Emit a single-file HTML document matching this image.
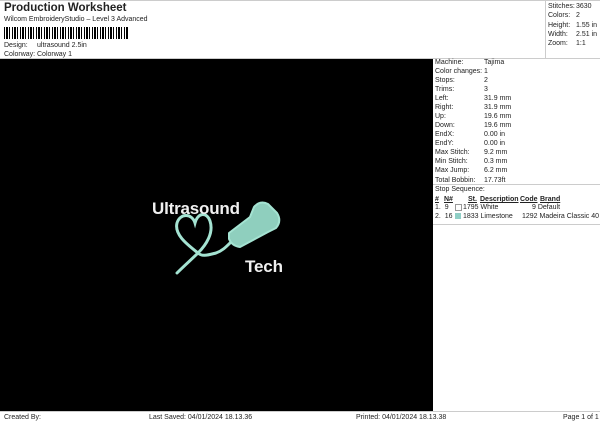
<!DOCTYPE html>
<html><head><style>
body{margin:0;width:600px;height:424px;background:#fff;font-family:"Liberation Sans",sans-serif;font-size:7px;color:#222;position:relative;overflow:hidden}
.a{position:absolute;white-space:nowrap;line-height:9px}
.r{position:absolute;left:435px;line-height:9.08px}
.r div span{display:inline-block;width:49px}
</style></head><body>
<div class="a" style="left:4px;top:2px;font-size:11.5px;font-weight:bold;line-height:13px">Production Worksheet</div>
<div class="a" style="left:4px;top:15px">Wilcom EmbroideryStudio – Level 3 Advanced</div>
<div style="position:absolute;left:4px;top:27px;width:125px;height:12px;background:repeating-linear-gradient(90deg,#000 0 1px,#fff 1px 2px,#000 2px 4px,#fff 4px 5px,#000 5px 6px,#fff 6px 8px)"></div>
<div class="a" style="left:4px;top:41px">Design:</div><div class="a" style="left:37px;top:41px">ultrasound 2.5in</div>
<div class="a" style="left:4px;top:50px">Colorway:</div><div class="a" style="left:37px;top:50px">Colorway 1</div>
<div style="position:absolute;left:0;top:0;width:600px;height:1px;background:#ccc"></div>
<div style="position:absolute;left:545px;top:0;width:1px;height:59px;background:#ccc"></div>
<div style="position:absolute;left:0;top:58px;width:600px;height:1px;background:#ccc"></div>
<div class="a" style="left:548px;top:2px;line-height:9.3px">Stitches:<br>Colors:<br>Height:<br>Width:<br>Zoom:</div>
<div class="a" style="left:576px;top:2px;line-height:9.3px">3630<br>2<br>1.55 in<br>2.51 in<br>1:1</div>
<div style="position:absolute;left:0;top:59px;width:433px;height:352px;background:#000"></div>
<svg style="position:absolute;left:140px;top:185px" width="160" height="100" viewBox="0 0 160 100">
<g fill="none" stroke="#a4e3d2" stroke-linecap="round" stroke-width="3">
<path d="M37 88 C 45 80 52 74 58 68 C 66 60 74 48 70 36 C 67 27 58 27 55 38 C 52 28 40 28 37 38 C 34 50 48 60 58 68 C 62 72 68 70 76 68 C 82 66 86 62 90 58"/>
</g>
<path d="M89 48 L110 32 L114 22 Q120 15 128 19 L137 28 Q142 36 136 43 L128 47 L100 62 Q92 61 89 54 Z" fill="#8fcfbe" stroke="#a4e3d2" stroke-width="2" stroke-linejoin="round"/>
<text x="12" y="29" font-family="Liberation Sans,sans-serif" font-size="17" font-weight="bold" fill="#f0f0f0" textLength="88">Ultrasound</text>
<text x="105" y="87" font-family="Liberation Sans,sans-serif" font-size="17" font-weight="bold" fill="#f0f0f0" textLength="38">Tech</text>
</svg>
<div class="r" style="top:57.5px">
<div><span>Machine:</span>Tajima</div><div><span>Color changes:</span>1</div><div><span>Stops:</span>2</div><div><span>Trims:</span>3</div><div><span>Left:</span>31.9 mm</div><div><span>Right:</span>31.9 mm</div><div><span>Up:</span>19.6 mm</div><div><span>Down:</span>19.6 mm</div><div><span>EndX:</span>0.00 in</div><div><span>EndY:</span>0.00 in</div><div><span>Max Stitch:</span>9.2 mm</div><div><span>Min Stitch:</span>0.3 mm</div><div><span>Max Jump:</span>6.2 mm</div><div><span>Total Bobbin:</span>17.73ft</div>
</div>
<div style="position:absolute;left:433px;top:184px;width:167px;height:1px;background:#ccc"></div>
<div class="a" style="left:435px;top:185px">Stop Sequence:</div>
<div class="a" style="left:435px;top:195px;font-weight:bold;text-decoration:underline">#</div>
<div class="a" style="left:444px;top:195px;font-weight:bold;text-decoration:underline">N#</div>
<div class="a" style="left:468px;top:195px;font-weight:bold;text-decoration:underline">St.</div>
<div class="a" style="left:480px;top:195px;font-weight:bold;text-decoration:underline">Description</div>
<div class="a" style="left:520px;top:195px;font-weight:bold;text-decoration:underline">Code</div>
<div class="a" style="left:540px;top:195px;font-weight:bold;text-decoration:underline">Brand</div>
<div class="a" style="left:435px;top:203px">1.&nbsp; 9</div><div style="position:absolute;left:455px;top:204px;width:5px;height:5px;border:1px solid #999;background:#fff"></div><div class="a" style="left:463px;top:203px">1795 White</div><div class="a" style="left:532px;top:203px">9 Default</div>
<div class="a" style="left:435px;top:212px">2.&nbsp; 16</div><div style="position:absolute;left:455px;top:213px;width:6px;height:6px;background:#8fcfc6"></div><div class="a" style="left:463px;top:212px">1833 Limestone</div><div class="a" style="left:522px;top:212px">1292 Madeira Classic 40</div>
<div style="position:absolute;left:433px;top:224px;width:167px;height:1px;background:#ccc"></div>
<div style="position:absolute;left:0;top:411px;width:600px;height:1px;background:#ccc"></div>
<div class="a" style="left:4px;top:413px">Created By:</div>
<div class="a" style="left:149px;top:413px">Last Saved: 04/01/2024 18.13.36</div>
<div class="a" style="left:356px;top:413px">Printed: 04/01/2024 18.13.38</div>
<div class="a" style="left:563px;top:413px">Page 1 of 1</div>
</body></html>
